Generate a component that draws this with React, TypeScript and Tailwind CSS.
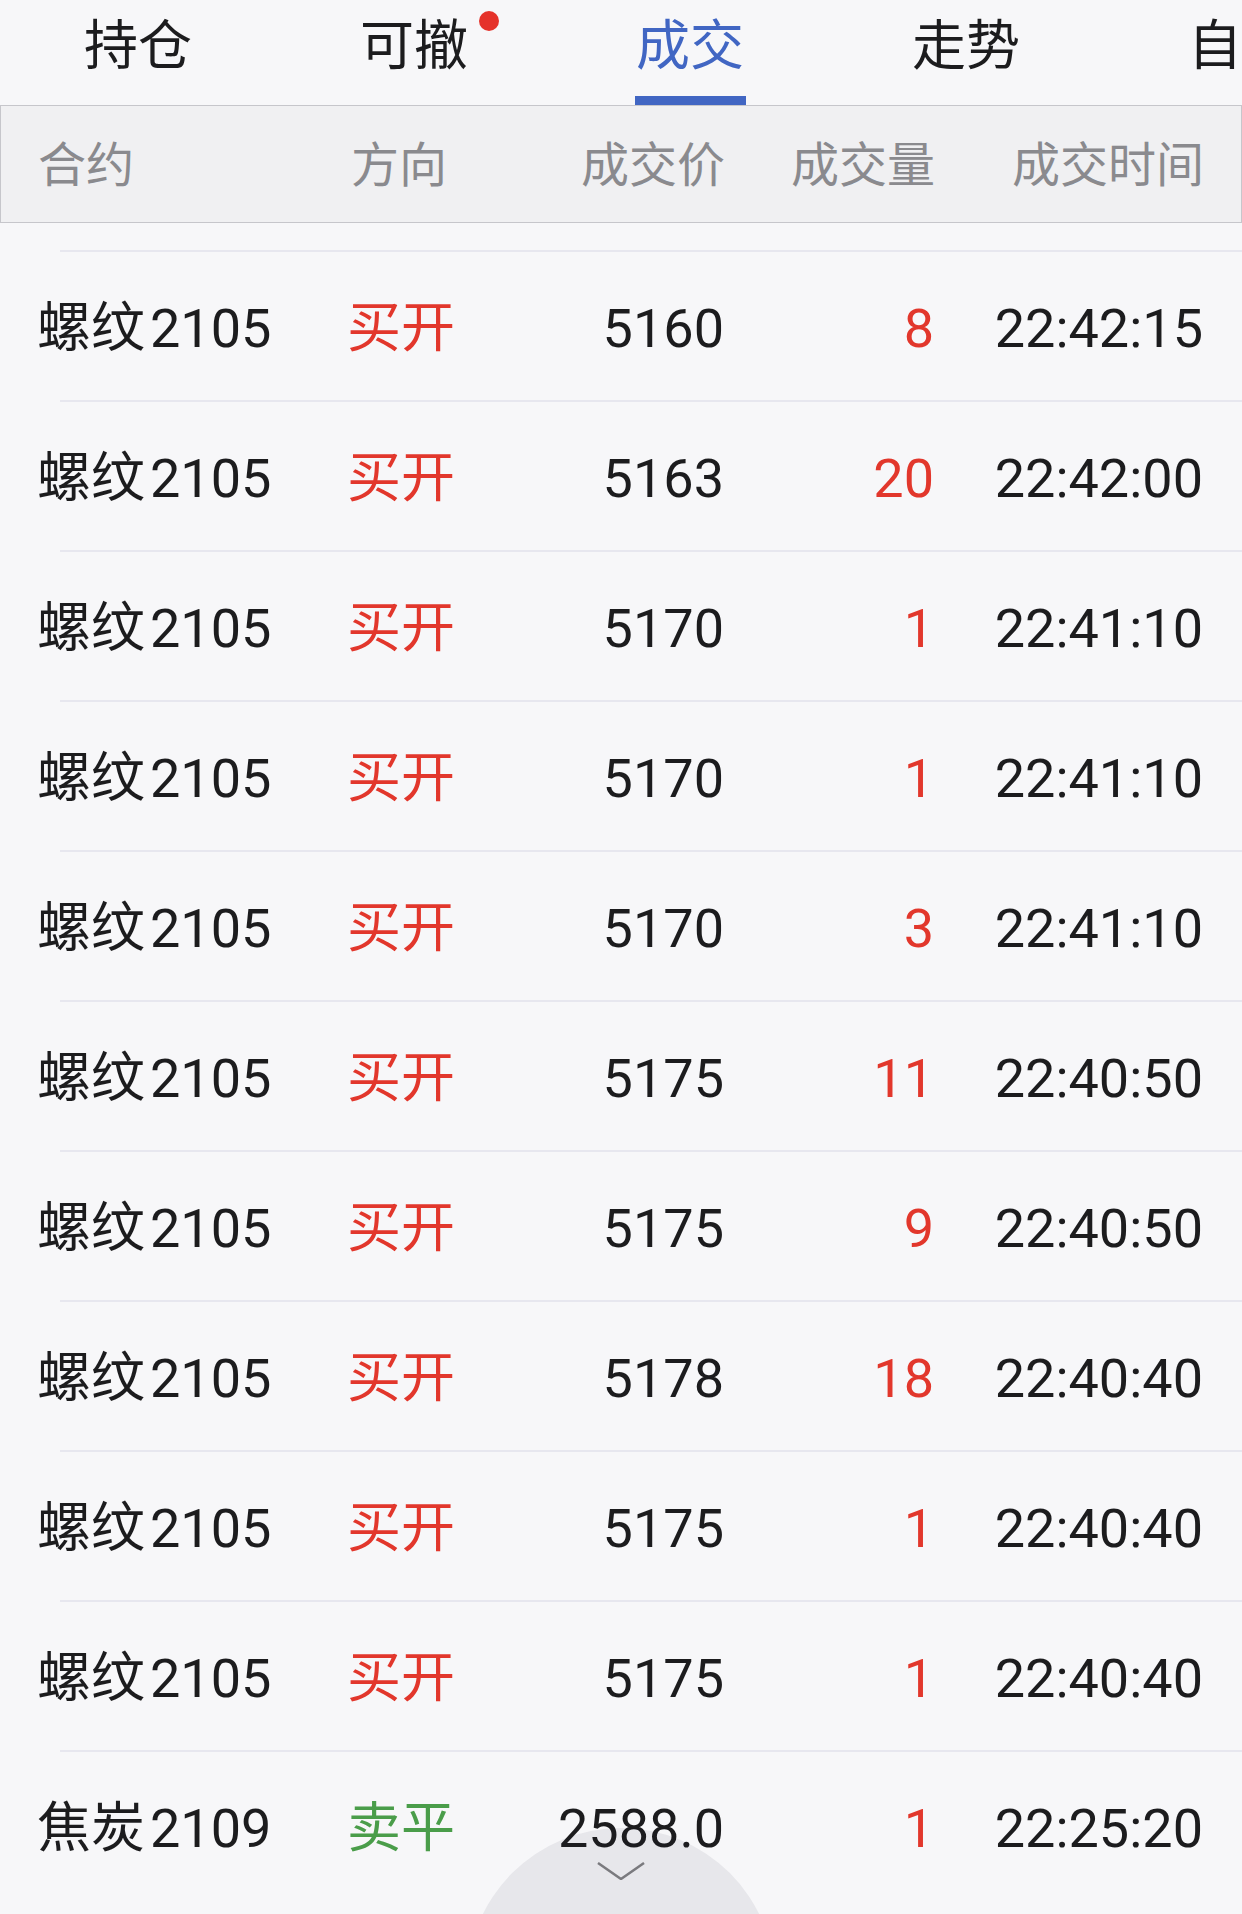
import React from 'react'

type Trade = {
  name: string
  code: string
  side: '买开' | '卖平'
  price: string
  qty: number
  time: string
}

const tabs = [
  { label: '持仓' },
  { label: '可撤', dot: true },
  { label: '成交', active: true },
  { label: '走势' },
  { label: '自选' },
]

const trades: Trade[] = [
  { name: '螺纹', code: '2105', side: '买开', price: '5160', qty: 8, time: '22:42:15' },
  { name: '螺纹', code: '2105', side: '买开', price: '5163', qty: 20, time: '22:42:00' },
  { name: '螺纹', code: '2105', side: '买开', price: '5170', qty: 1, time: '22:41:10' },
  { name: '螺纹', code: '2105', side: '买开', price: '5170', qty: 1, time: '22:41:10' },
  { name: '螺纹', code: '2105', side: '买开', price: '5170', qty: 3, time: '22:41:10' },
  { name: '螺纹', code: '2105', side: '买开', price: '5175', qty: 11, time: '22:40:50' },
  { name: '螺纹', code: '2105', side: '买开', price: '5175', qty: 9, time: '22:40:50' },
  { name: '螺纹', code: '2105', side: '买开', price: '5178', qty: 18, time: '22:40:40' },
  { name: '螺纹', code: '2105', side: '买开', price: '5175', qty: 1, time: '22:40:40' },
  { name: '螺纹', code: '2105', side: '买开', price: '5175', qty: 1, time: '22:40:40' },
  { name: '焦炭', code: '2109', side: '卖平', price: '2588.0', qty: 1, time: '22:25:20' },
]

// 五列共用同一套宽度，表头和行才能对齐
const cols = 'grid grid-cols-[310px_160px_217px_210px_269px] pl-[37px] pr-[39px]'

function TabBar() {
  return (
    <div className="flex h-[105px] overflow-hidden">
      {tabs.map((t) => (
        <div key={t.label} className="flex w-[276px] shrink-0 flex-col items-center pt-[20px]">
          <span
            className={`relative whitespace-nowrap text-[54px] leading-[54px] ${
              t.active ? 'text-[#4166c3]' : 'text-[#1c1c1e]'
            }`}
          >
            {t.label}
            {t.dot && (
              <span className="absolute left-full top-[-9px] ml-[11px] h-[20px] w-[20px] rounded-full bg-[#e5322a]" />
            )}
          </span>
          {t.active && <span className="mt-auto h-[9px] w-[111px] bg-[#4166c3]" />}
        </div>
      ))}
    </div>
  )
}

function TableHeader() {
  return (
    <div
      className={`${cols} h-[118px] items-center border border-[#c6c6cb] bg-[#f0f0f2] pt-[4px] text-[48px] text-[#8a8a8e]`}
    >
      <span>合约</span>
      <span className="pl-[3px]">方向</span>
      <span className="text-right">成交价</span>
      <span className="text-right">成交量</span>
      <span className="text-right">成交时间</span>
    </div>
  )
}

function TradeRow({ t }: { t: Trade }) {
  const buy = t.side === '买开'
  return (
    <div className="flex flex-col">
      <div className="ml-[60px] h-[2px] bg-[#e7e7ef]" />
      <div className={`${cols} h-[148px] items-center pt-[4px] text-[54px] text-[#1c1c1e]`}>
        <span className="whitespace-nowrap">
          {t.name}
          <span className="ml-[5px]">{t.code}</span>
        </span>
        <span className={buy ? 'text-[#e2372c]' : 'text-[#4a9d4a]'}>{t.side}</span>
        <span className="text-right">{t.price}</span>
        <span className="text-right text-[#e2372c]">{t.qty}</span>
        <span className="text-right">{t.time}</span>
      </div>
    </div>
  )
}

export default function App() {
  return (
    <div className="relative h-[1914px] w-[1242px] overflow-hidden bg-[#f7f7f9] font-['Roboto','Noto_Sans_CJK_SC',sans-serif]">
      <TabBar />
      <TableHeader />
      <div className="pt-[27px]">
        {trades.map((t, i) => (
          <TradeRow key={i} t={t} />
        ))}
      </div>

      {/* 底部的“收起”把手，半透明压在列表上 */}
      <div className="absolute left-[467px] top-[1828px] flex h-[308px] w-[308px] justify-center rounded-full bg-[#1c1c3c]/[0.07] pt-[34px]">
        <svg width="48" height="18" viewBox="0 0 48 18" aria-hidden="true">
          <path d="M1 1l23 16L47 1" fill="none" stroke="#7a7a7e" strokeWidth="2.5" />
        </svg>
      </div>
    </div>
  )
}
